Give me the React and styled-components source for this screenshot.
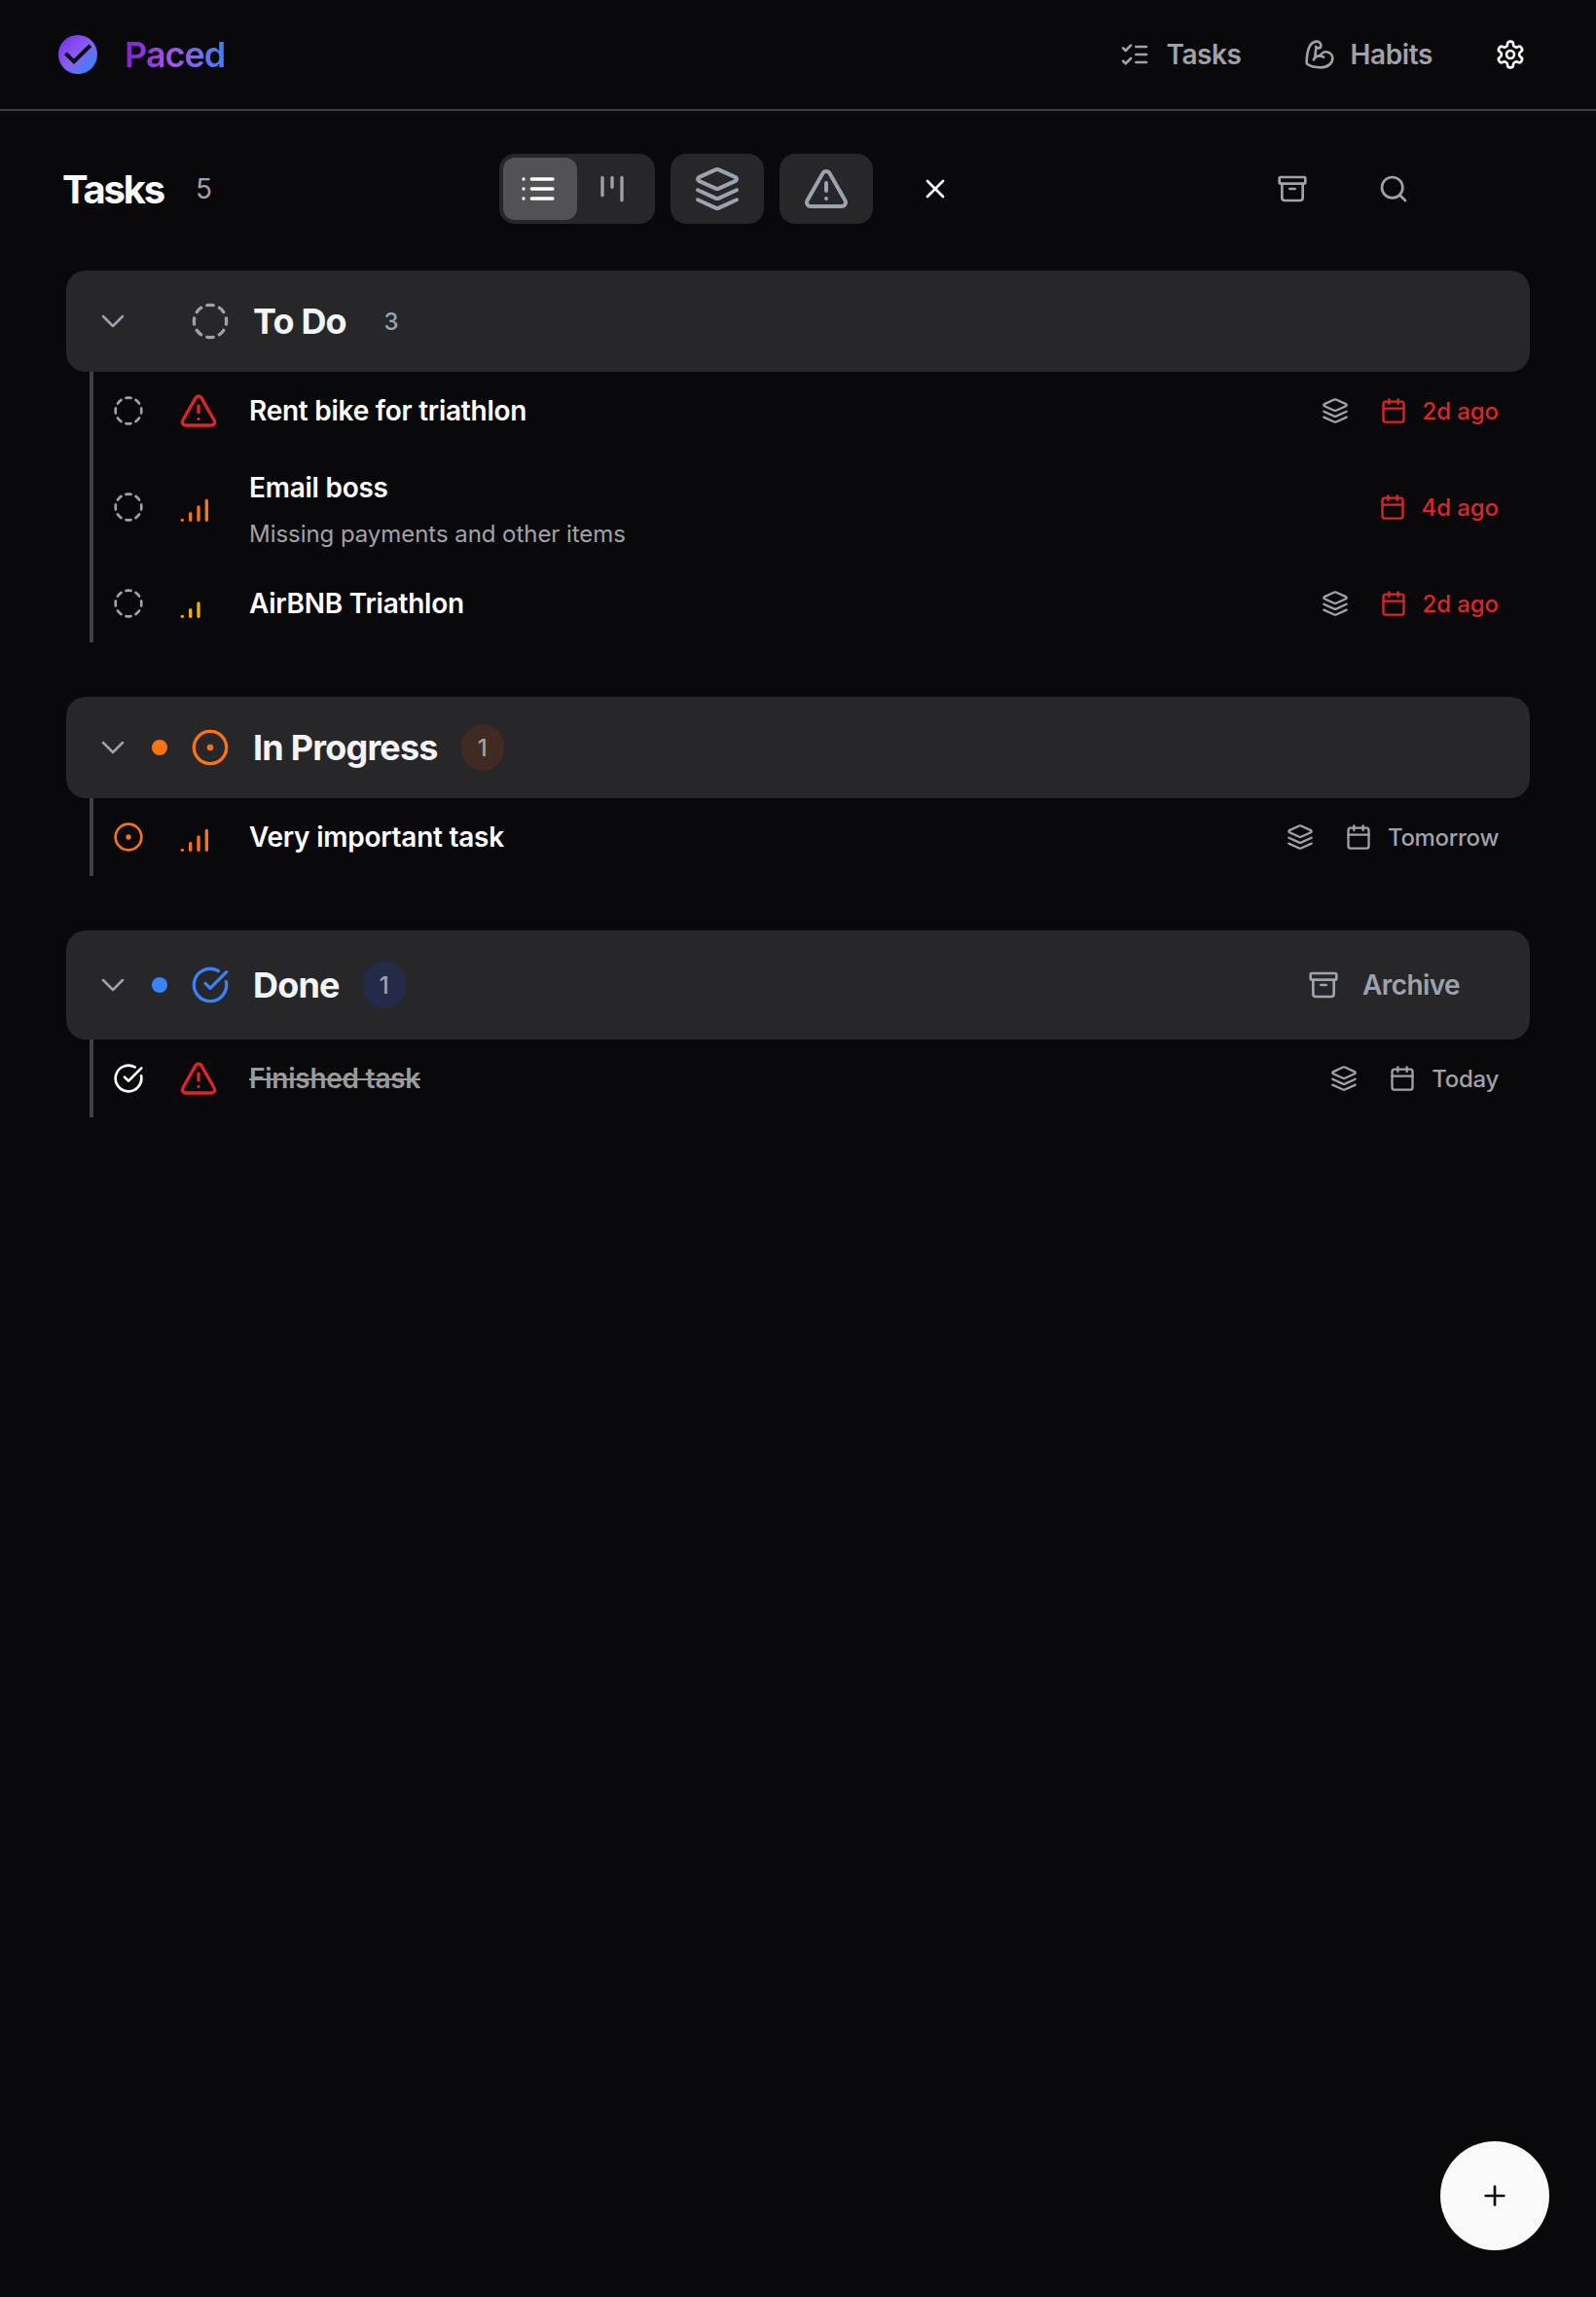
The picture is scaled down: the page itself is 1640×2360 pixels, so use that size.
import React from "react";
import styled, { createGlobalStyle } from "styled-components";
import {
  Archive,
  BicepsFlexed,
  Calendar,
  ChevronDown,
  CircleCheckBig,
  CircleDashed,
  CircleDot,
  Plus,
  Search,
  SignalHigh,
  SignalMedium,
  TriangleAlert,
  X,
} from "lucide-react";

const GlobalStyle = createGlobalStyle`
  * { box-sizing: border-box; }
  body {
    margin: 0;
    background: #09090b;
    color: #fafafa;
    font-family: Inter, "Liberation Sans", sans-serif;
    -webkit-font-smoothing: antialiased;
  }
  button { font: inherit; color: inherit; border: 0; padding: 0; background: none; }
  svg { display: block; flex: none; }
`;

/* ---------- icons ---------- */

function Glyph({ size = 32, stroke = 2, children }) {
  return (
    <svg
      width={size}
      height={size}
      viewBox="0 0 24 24"
      fill="none"
      stroke="currentColor"
      strokeWidth={stroke}
      strokeLinecap="round"
      strokeLinejoin="round"
    >
      {children}
    </svg>
  );
}

const ListChecksIcon = () => (
  <Glyph stroke={2}>
    <path d="m3 17 2 2 4-4" />
    <path d="m3 7 2 2 4-4" />
    <path d="M13 6h8" />
    <path d="M13 12h8" />
    <path d="M13 18h8" />
  </Glyph>
);

const GearIcon = () => (
  <Glyph>
    <path d="M12.22 2h-.44a2 2 0 0 0-2 2v.18a2 2 0 0 1-1 1.73l-.43.25a2 2 0 0 1-2 0l-.15-.08a2 2 0 0 0-2.73.73l-.22.38a2 2 0 0 0 .73 2.73l.15.1a2 2 0 0 1 1 1.72v.51a2 2 0 0 1-1 1.74l-.15.09a2 2 0 0 0-.73 2.73l.22.38a2 2 0 0 0 2.73.73l.15-.08a2 2 0 0 1 2 0l.43.25a2 2 0 0 1 1 1.73V20a2 2 0 0 0 2 2h.44a2 2 0 0 0 2-2v-.18a2 2 0 0 1 1-1.73l.43-.25a2 2 0 0 1 2 0l.15.08a2 2 0 0 0 2.73-.73l.22-.39a2 2 0 0 0-.73-2.73l-.15-.08a2 2 0 0 1-1-1.74v-.5a2 2 0 0 1 1-1.74l.15-.09a2 2 0 0 0 .73-2.73l-.22-.38a2 2 0 0 0-2.73-.73l-.15.08a2 2 0 0 1-2 0l-.43-.25a2 2 0 0 1-1-1.73V4a2 2 0 0 0-2-2z" />
    <circle cx="12" cy="12" r="3" />
  </Glyph>
);

const ListIcon = () => (
  <Glyph size={40}>
    <path d="M8 6h13M8 12h13M8 18h13M3 6h.01M3 12h.01M3 18h.01" />
  </Glyph>
);

const KanbanIcon = () => (
  <Glyph size={40}>
    <path d="M6 5v11M12 5v6M18 5v14" />
  </Glyph>
);

const LayersIcon = ({ size, stroke }) => (
  <Glyph size={size} stroke={stroke}>
    <path d="m12.83 2.18a2 2 0 0 0-1.66 0L2.6 6.08a1 1 0 0 0 0 1.83l8.58 3.91a2 2 0 0 0 1.66 0l8.58-3.9a1 1 0 0 0 0-1.83Z" />
    <path d="m22 17.65-9.17 4.16a2 2 0 0 1-1.66 0L2 17.65" />
    <path d="m22 12.65-9.17 4.16a2 2 0 0 1-1.66 0L2 12.65" />
  </Glyph>
);

const LogoMark = () => (
  <svg width="40" height="40" viewBox="0 0 40 40" fill="none">
    <defs>
      <linearGradient id="logo-fill" x1="6" y1="6" x2="34" y2="34" gradientUnits="userSpaceOnUse">
        <stop offset="0" stopColor="#7c3aed" />
        <stop offset="0.5" stopColor="#8b5cf6" />
        <stop offset="1" stopColor="#3b82f6" />
      </linearGradient>
    </defs>
    <circle cx="20" cy="20" r="20" fill="url(#logo-fill)" />
    <path d="M7.5 18.8 16 27.3 32.8 10.8" stroke="#09090b" strokeWidth="4" />
  </svg>
);

/* ---------- top bar ---------- */

const TopBar = styled.header`
  display: flex;
  align-items: center;
  justify-content: space-between;
  height: 114px;
  padding: 0 72px 0 60px;
  border-bottom: 2px solid #3f3f46;
`;

const Brand = styled.div`
  display: flex;
  align-items: center;
  gap: 28px;
`;

const BrandName = styled.span`
  font-size: 36px;
  line-height: 56px;
  font-weight: 640;
  letter-spacing: -1px;
  color: transparent;
  background: linear-gradient(to right, #7e22ce, #a855f7 50%, #3b82f6);
  background-clip: text;
  -webkit-background-clip: text;
`;

const Nav = styled.nav`
  display: flex;
  align-items: center;
`;

const NavLink = styled.a`
  display: flex;
  align-items: center;
  gap: 16px;
  margin-right: 64px;
  font-size: 28px;
  font-weight: 590;
  letter-spacing: -0.4px;
  color: #a1a1aa;
`;

const SettingsButton = styled.button`
  color: #fafafa;
`;

/* ---------- page toolbar ---------- */

const Toolbar = styled.div`
  display: flex;
  align-items: center;
  height: 72px;
  margin-top: 44px;
  padding: 0 192px 0 64px;
`;

const TitleGroup = styled.div`
  display: flex;
  align-items: center;
  gap: 33px;
  width: 449px;
`;

const PageTitle = styled.h1`
  margin: 0;
  font-size: 40px;
  font-weight: 700;
  letter-spacing: -2.2px;
`;

const TotalCount = styled.span`
  font-size: 28px;
  color: #a1a1aa;
`;

const Filters = styled.div`
  display: flex;
  align-items: center;
  gap: 16px;
`;

const ViewSwitch = styled.div`
  display: flex;
  width: 160px;
  height: 72px;
  padding: 4px;
  border-radius: 16px;
  background: #27272a;
`;

const ViewOption = styled.button`
  display: flex;
  align-items: center;
  width: 76px;
  height: 64px;
  padding-left: 16px;
  border-radius: 12px;
  color: ${(p) => (p.$active ? "#fff" : "#a1a1aa")};
  background: ${(p) => (p.$active ? "#525254" : "transparent")};
`;

const FilterButton = styled.button`
  display: grid;
  place-items: center;
  width: 96px;
  height: 72px;
  border-radius: 16px;
  background: #27272a;
  color: #9ca3af;
`;

const ClearButton = styled.button`
  display: grid;
  place-items: center;
  width: 96px;
  height: 72px;
`;

const PageActions = styled.div`
  display: flex;
  gap: 72px;
  margin-left: auto;
  color: #a1a1aa;
`;

/* ---------- sections ---------- */

const Board = styled.main`
  display: flex;
  flex-direction: column;
  gap: 56px;
  padding: 48px 68px 0;
`;

const SectionHeader = styled.div`
  display: flex;
  align-items: center;
  height: ${(p) => (p.$tall ? 112 : 104)}px;
  padding: 0 72px 0 28px;
  border-radius: 20px;
  background: #27272a;
`;

const Chevron = styled.span`
  margin-right: 20px;
  color: #9ca3af;
`;

const StatusDot = styled.span`
  width: 16px;
  height: 16px;
  margin-right: 24px;
  border-radius: 50%;
  background: ${(p) => p.$color};
`;

const StatusIcon = styled.span`
  margin-right: 24px;
  color: ${(p) => p.$color};
`;

const SectionTitle = styled.h2`
  margin: 0 24px 0 0;
  font-size: 36px;
  font-weight: 650;
  letter-spacing: -0.8px;
  color: #f3f4f6;
`;

const CountBadge = styled.span`
  display: grid;
  place-items: center;
  width: 44px;
  height: 48px;
  border-radius: 24px;
  font-size: 24px;
  font-weight: 550;
  color: #9ca3af;
  background: ${(p) => p.$color};
`;

const ArchiveButton = styled.button`
  display: flex;
  align-items: center;
  gap: 24px;
  margin-left: auto;
  font-size: 28px;
  font-weight: 560;
  letter-spacing: -0.6px;
  color: #9ca3af;
`;

const TaskList = styled.div`
  margin-left: 24px;
  border-left: 4px solid #3f3f46;
`;

/* ---------- rows ---------- */

const Row = styled.div`
  display: flex;
  align-items: center;
  height: ${(p) => (p.$tall ? 118 : 80)}px;
  padding: 0 32px 0 20px;
`;

const RowStatus = styled.span`
  width: 68px;
  color: ${(p) => p.$color};
`;

const Priority = styled.span`
  width: 72px;
  color: ${(p) => p.$color};
`;

const RowBody = styled.div`
  display: flex;
  flex-direction: column;
  gap: 15px;
  padding-top: ${(p) => (p.$tall ? 7 : 0)}px;
`;

const RowTitle = styled.span`
  font-size: 28px;
  line-height: 34px;
  font-weight: 600;
  letter-spacing: -0.25px;
  color: ${(p) => (p.$done ? "#9b9b9b" : "#fff")};
  text-decoration: ${(p) => (p.$done ? "line-through" : "none")};
`;

const RowNote = styled.span`
  font-size: 24px;
  line-height: 32px;
  letter-spacing: -0.05px;
  color: #a1a1aa;
`;

const RowMeta = styled.div`
  display: flex;
  align-items: center;
  gap: 32px;
  margin-left: auto;
  color: #a1a1aa;
`;

const DueDate = styled.span`
  display: flex;
  align-items: center;
  gap: 16px;
  font-size: 24px;
  font-weight: 550;
  letter-spacing: ${(p) => (p.$late ? -0.1 : -0.3)}px;
  color: ${(p) => (p.$late ? "#dc2626" : "#a1a1aa")};
`;

const AddButton = styled.button`
  position: fixed;
  right: 48px;
  bottom: 48px;
  display: grid;
  place-items: center;
  width: 112px;
  height: 112px;
  border-radius: 50%;
  background: #fafafa;
  color: #09090b;
`;

const statuses = {
  todo: { Icon: CircleDashed, color: "#a1a1aa" },
  progress: { Icon: CircleDot, color: "#f97316" },
  done: { Icon: CircleCheckBig, color: "#fff" },
};

const priorities = {
  urgent: { Icon: TriangleAlert, color: "#dc2626" },
  high: { Icon: SignalHigh, color: "#f97316" },
  medium: { Icon: SignalMedium, color: "#eab308" },
};

const sections = [
  {
    title: "To Do",
    Icon: CircleDashed,
    color: "#a1a1aa",
    dot: "transparent",
    badge: "transparent",
    tasks: [
      { status: "todo", priority: "urgent", title: "Rent bike for triathlon", project: true, due: "2d ago", late: true },
      { status: "todo", priority: "high", title: "Email boss", note: "Missing payments and other items", due: "4d ago", late: true },
      { status: "todo", priority: "medium", title: "AirBNB Triathlon", project: true, due: "2d ago", late: true },
    ],
  },
  {
    title: "In Progress",
    Icon: CircleDot,
    color: "#f97316",
    dot: "#f97316",
    badge: "#412a23",
    tasks: [{ status: "progress", priority: "high", title: "Very important task", project: true, due: "Tomorrow" }],
  },
  {
    title: "Done",
    Icon: CircleCheckBig,
    color: "#3b82f6",
    dot: "#3b82f6",
    badge: "#242b48",
    archivable: true,
    tasks: [{ status: "done", priority: "urgent", title: "Finished task", project: true, due: "Today" }],
  },
];

function TaskRow({ task }) {
  const status = statuses[task.status];
  const priority = priorities[task.priority];
  return (
    <Row $tall={Boolean(task.note)}>
      <RowStatus $color={status.color}>
        <status.Icon size={32} />
      </RowStatus>
      <Priority $color={priority.color}>
        <priority.Icon size={40} />
      </Priority>
      <RowBody $tall={Boolean(task.note)}>
        <RowTitle $done={task.status === "done"}>{task.title}</RowTitle>
        {task.note && <RowNote>{task.note}</RowNote>}
      </RowBody>
      <RowMeta>
        {task.project && <LayersIcon size={28} stroke={2} />}
        <DueDate $late={task.late}>
          <Calendar size={28} />
          {task.due}
        </DueDate>
      </RowMeta>
    </Row>
  );
}

function Section({ section }) {
  return (
    <section>
      <SectionHeader $tall={section.archivable}>
        <Chevron>
          <ChevronDown size={40} strokeWidth={1.5} />
        </Chevron>
        <StatusDot $color={section.dot} />
        <StatusIcon $color={section.color}>
          <section.Icon size={40} />
        </StatusIcon>
        <SectionTitle>{section.title}</SectionTitle>
        <CountBadge $color={section.badge}>{section.tasks.length}</CountBadge>
        {section.archivable && (
          <ArchiveButton>
            <Archive size={32} />
            Archive
          </ArchiveButton>
        )}
      </SectionHeader>
      <TaskList>
        {section.tasks.map((task) => (
          <TaskRow key={task.title} task={task} />
        ))}
      </TaskList>
    </section>
  );
}

export default function App() {
  const total = sections.reduce((sum, s) => sum + s.tasks.length, 0);
  return (
    <>
      <GlobalStyle />
      <TopBar>
        <Brand>
          <LogoMark />
          <BrandName>Paced</BrandName>
        </Brand>
        <Nav>
          <NavLink>
            <ListChecksIcon />
            Tasks
          </NavLink>
          <NavLink>
            <BicepsFlexed size={32} />
            Habits
          </NavLink>
          <SettingsButton>
            <GearIcon />
          </SettingsButton>
        </Nav>
      </TopBar>
      <Toolbar>
        <TitleGroup>
          <PageTitle>Tasks</PageTitle>
          <TotalCount>{total}</TotalCount>
        </TitleGroup>
        <Filters>
          <ViewSwitch>
            <ViewOption $active>
              <ListIcon />
            </ViewOption>
            <ViewOption>
              <KanbanIcon />
            </ViewOption>
          </ViewSwitch>
          <FilterButton>
            <LayersIcon size={48} />
          </FilterButton>
          <FilterButton>
            <TriangleAlert size={48} />
          </FilterButton>
          <ClearButton>
            <X size={32} />
          </ClearButton>
        </Filters>
        <PageActions>
          <Archive size={32} />
          <Search size={32} />
        </PageActions>
      </Toolbar>
      <Board>
        {sections.map((section) => (
          <Section key={section.title} section={section} />
        ))}
      </Board>
      <AddButton>
        <Plus size={32} />
      </AddButton>
    </>
  );
}
